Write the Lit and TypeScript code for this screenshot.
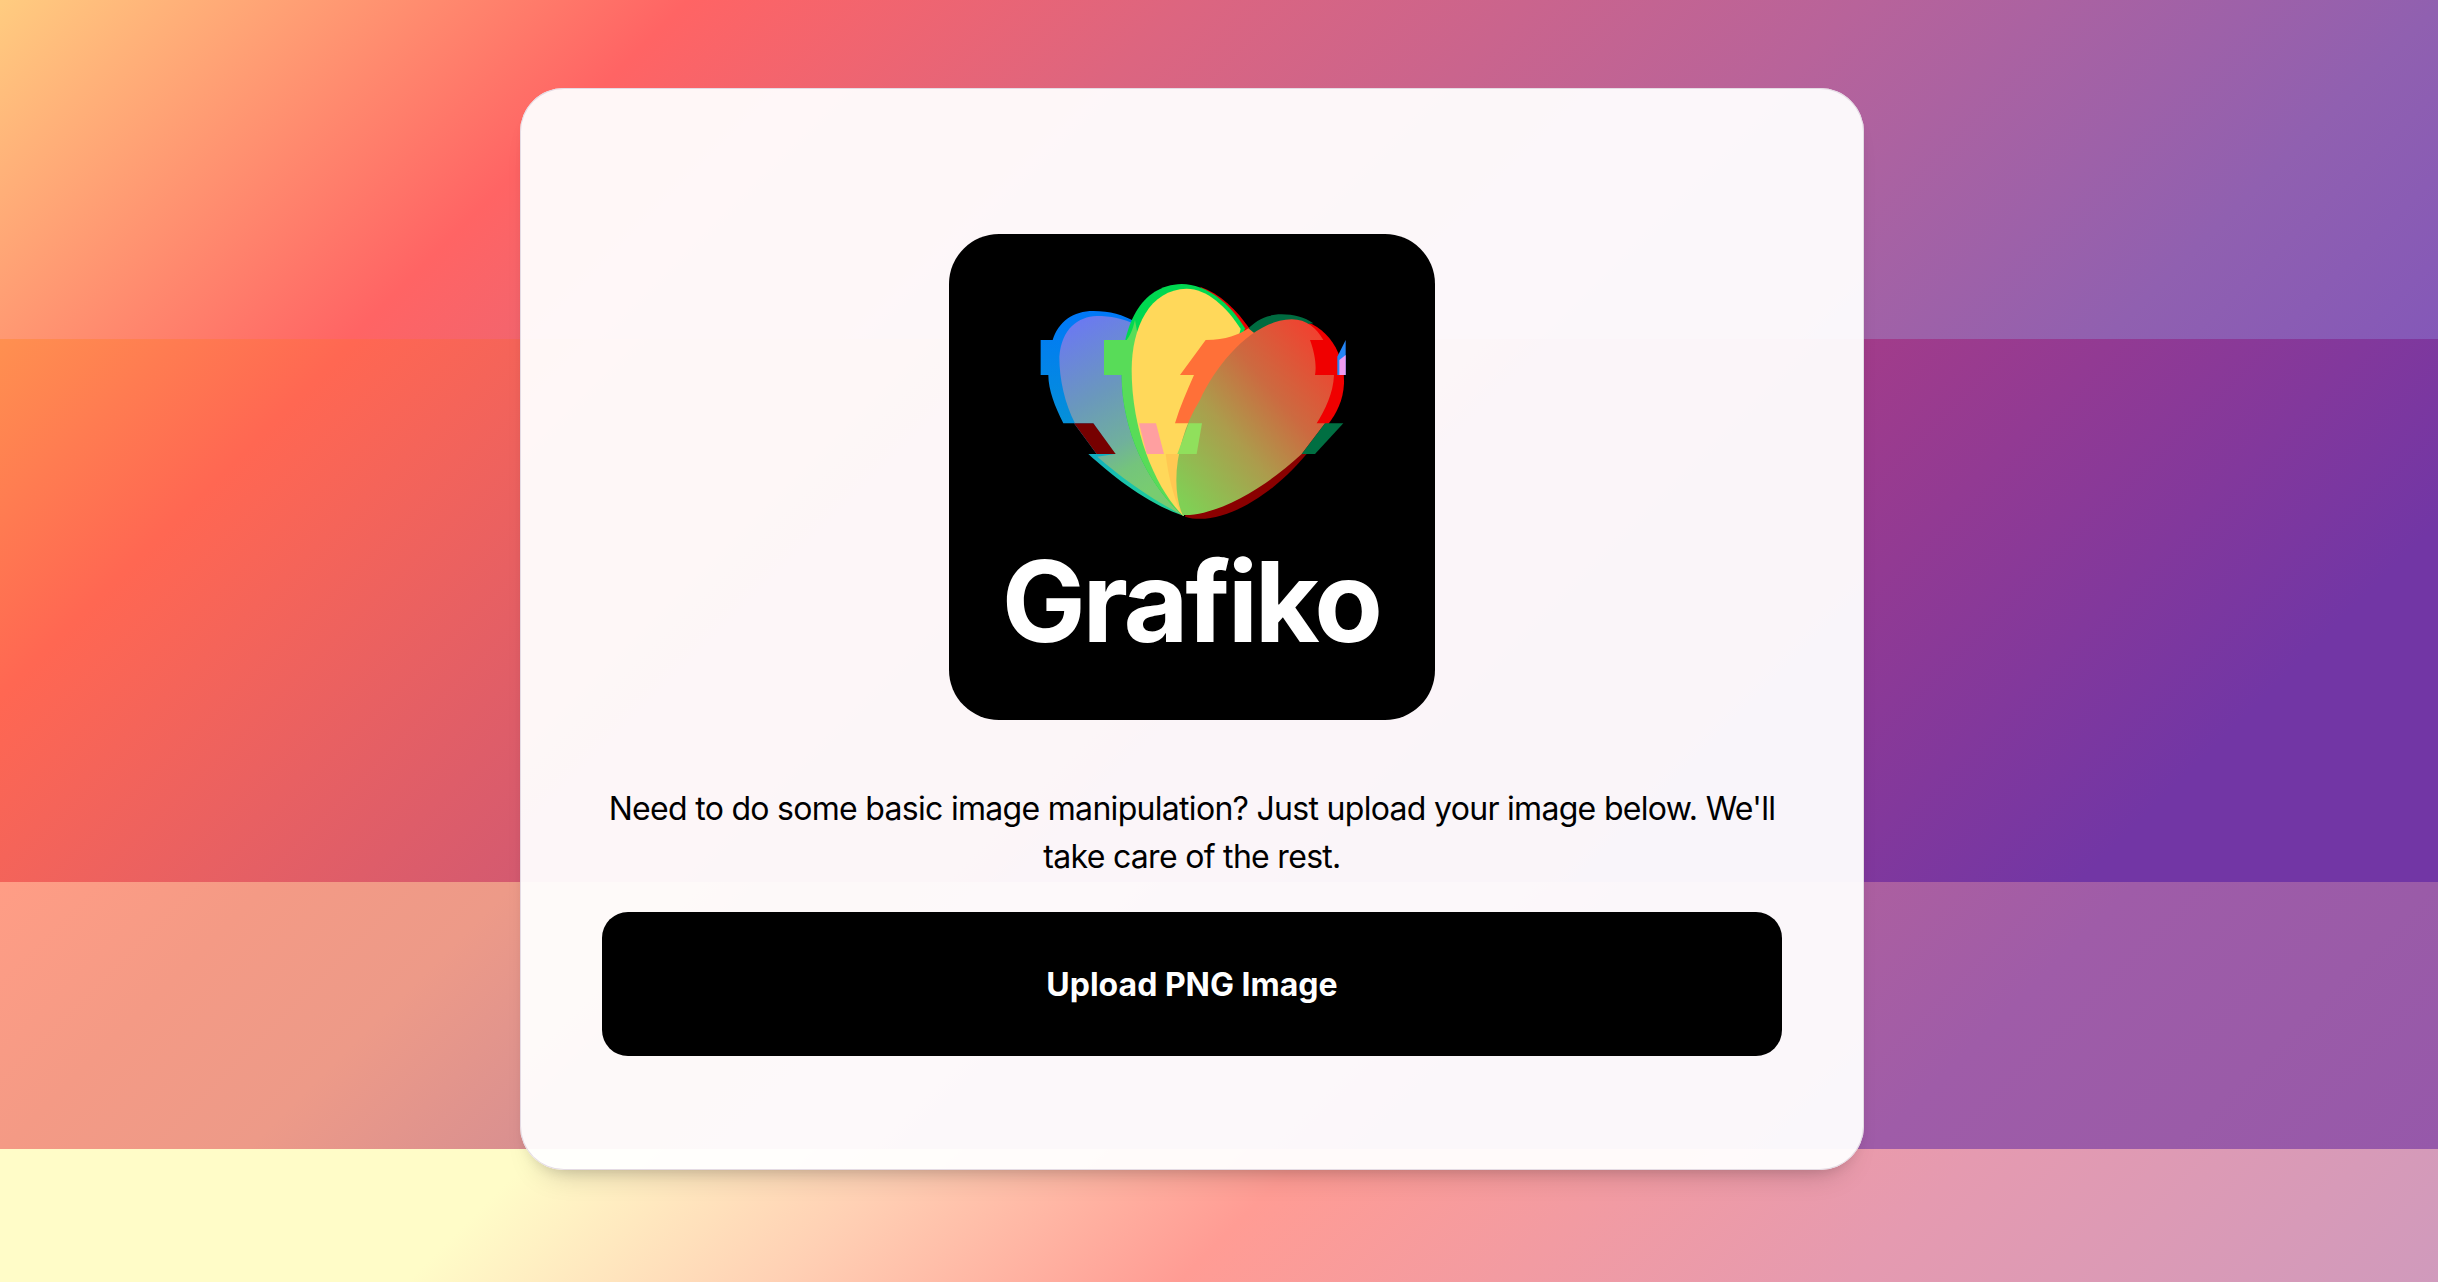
import { LitElement, html, css, svg } from "lit";
import { customElement } from "lit/decorators.js";

@customElement("grafiko-logo")
class GrafikoLogo extends LitElement {
  static styles = css`
    :host { display: block; width: 486px; height: 486px; border-radius: 50px; background: #000; overflow: hidden; }
    svg { display: block; width: 100%; height: 100%; }
    .art { filter: blur(1.6px); }
    .word { font-family: Inter, "Liberation Sans", sans-serif; font-weight: 650; font-size: 336px; fill: #fff; letter-spacing: -9.5px; filter: blur(1.2px); }
  `;
  render() {
    return html`<svg viewBox="-153 -78 1458 1458" xmlns="http://www.w3.org/2000/svg">
      ${svg`
      <defs>
        <linearGradient id="lo" x1="0" y1="0" x2="0" y2="1">
          <stop offset="0" stop-color="#0078f8"/>
          <stop offset="0.55" stop-color="#0590d8"/>
          <stop offset="0.8" stop-color="#18c0b0"/>
          <stop offset="1" stop-color="#20d090"/>
        </linearGradient>
        <linearGradient id="lp" x1="0" y1="0" x2="0.35" y2="1">
          <stop offset="0" stop-color="#6b74fa"/>
          <stop offset="0.45" stop-color="#6a98bc"/>
          <stop offset="0.72" stop-color="#70b09c"/>
          <stop offset="0.85" stop-color="#74c47c"/>
          <stop offset="1" stop-color="#78cc70"/>
        </linearGradient>
        <linearGradient id="rp" x1="0.9" y1="0.05" x2="0.05" y2="0.95">
          <stop offset="0" stop-color="#f2402f"/>
          <stop offset="0.35" stop-color="#cc6a40"/>
          <stop offset="0.62" stop-color="#ac9c4c"/>
          <stop offset="1" stop-color="#80d055"/>
        </linearGradient>
      </defs>
      <g class="art">
        <path fill="#8a0000" d="M555 770C650 800 800 725 920 582L985 490L1000 420L620 500Z"/>
        <path fill="#f00000" d="M870 175C970 180 1035 270 1032 370C1030 420 1010 460 985 492L900 492L800 200Z"/>
        <path fill="#006b40" d="M745 205C775 175 810 163 845 163C880 163 915 172 940 190L860 200L760 225Z"/>
        <path fill="#e80000" d="M600 80C660 100 710 150 748 205L720 230Z"/>

        <path fill="url(#lo)" d="M552 768C440 730 340 650 265 582L290 582L222 490L190 490C165 440 145 390 145 345L122 345L122 240L158 240C175 185 220 153 280 153C330 153 370 165 405 185L500 600Z"/>
        <path fill="url(#lp)" d="M552 768C450 715 360 650 292 590L345 582L280 490L225 490C195 430 178 360 178 290C185 205 235 170 290 168C330 168 370 175 410 195L520 620Z"/>
        <path fill="#760000" d="M222 490L280 490L347 582L290 582Z"/>

        <path fill="#00d850" d="M550 768C450 680 365 520 365 345C365 200 420 75 545 72C620 72 690 130 735 205L640 500Z"/>
        <path fill="#58dc58" d="M550 768C450 680 365 520 365 345L312 345L312 240L380 240C395 220 400 200 405 180L500 700Z"/>
        <path fill="#ffd85a" d="M550 768C470 690 395 520 395 330C395 200 450 88 560 86C620 86 680 140 722 207L620 600Z"/>
        <path fill="#ff9fa0" d="M417 490L468 490L492 582L440 582Z"/>
        <path fill="#ffc852" d="M497 582L535 582L545 765C520 710 505 650 497 582Z"/>

        <path fill="#ff7038" d="M745 205C715 225 680 240 617 240L540 345L582 345C560 395 540 440 525 490L575 490C600 410 660 290 770 225Z"/>

        <path fill="url(#rp)" d="M548 765C510 680 530 530 600 420C650 310 760 180 875 178C920 178 950 205 970 240L930 240C945 280 950 320 945 345L1002 345C1000 400 975 450 950 490L975 490L905 582C800 680 650 770 548 765Z"/>
        <path fill="#90e05c" d="M566 490L606 490L590 582L532 582Z"/>
        <path fill="#006f42" d="M975 490L1030 490L945 582L905 582Z"/>
        <path fill="#2585f5" d="M1037 240L1037 345L1012 345L1012 290Z"/>
        <path fill="#f09af0" d="M1037 285L1037 345L1018 345L1018 300Z"/>
      </g>
      <text class="word" x="572" y="1146" text-anchor="middle">Grafiko</text>
      `}
    </svg>`;
  }
}

@customElement("app-root")
class AppRoot extends LitElement {
  static styles = css`
    :host { display: block; position: relative; width: 100%; height: 1282px; overflow: hidden; background: #ff6b5b; font-family: Inter, "Noto Sans", sans-serif; }
    .band { position: absolute; left: 0; right: 0; }
    .b1 { top: 0; height: 339px; background: linear-gradient(135deg, #ffcc80 0, #ff6464 24.8%, #dc6580 43%, #b8639a 67%, #9060b0 88%, #8458b8 100%); }
    .b2 { top: 339px; height: 543px; background: linear-gradient(135deg, #ff9050 0, #ff6752 12%, #d45a70 35.6%, #a23c8a 62.4%, #7236a5 88%, #7236a5 100%); }
    .b3 { top: 882px; height: 267px; background: linear-gradient(135deg, #ff9d85 0, #f49a85 10%, #ed9a88 19%, #d99090 29%, #ac5fa0 69%, #9f5ca8 79%, #9a5ba8 90%, #9658aa 100%); }
    .b4 { top: 1149px; height: 133px; background: linear-gradient(135deg, #fffcc8 21%, #ffd0b4 35.5%, #ff9c94 51%, #e59ab0 77%, #d09abc 100%); }
    .card {
      position: relative; box-sizing: border-box; width: 1344px; height: 1082px; margin-left: 520px; top: 88px;
      padding: 146px 82px 0; border-radius: 44px; background: rgba(255,255,255,.95);
      box-shadow: inset 0 0 0 1px rgba(225,215,225,.9), 0 20px 30px -20px rgba(0,0,0,.25), 0 8px 14px -8px rgba(0,0,0,.12);
      display: flex; flex-direction: column; align-items: center;
    }
    p { margin: 65px 0 0; font-size: 32px; letter-spacing: -0.7px; line-height: 48px; text-align: center; color: #000; width: 1180px; }
    button {
      margin-top: 31px; width: 1180px; height: 144px; border: 0; border-radius: 26px; background: #000; color: #fff;
      font: 700 32px Inter, "Noto Sans", sans-serif;
    }
  `;
  render() {
    return html`
      <div class="band b1"></div><div class="band b2"></div><div class="band b3"></div><div class="band b4"></div>
      <div class="card">
        <grafiko-logo></grafiko-logo>
        <p>Need to do some basic image manipulation? Just upload your image below. We'll take care of the rest.</p>
        <button>Upload PNG Image</button>
      </div>`;
  }
}
